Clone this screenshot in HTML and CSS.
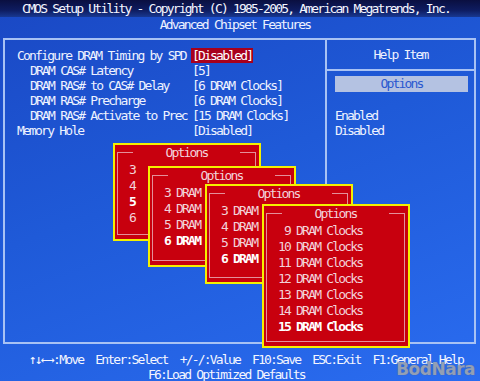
FILE: index.html
```html
<!DOCTYPE html>
<html lang="en">
<head>
    <meta charset="UTF-8">
    <title>Advanced Chipset Features</title>
    <link rel="stylesheet" href="styles.css">
</head>
<body>

<div class="screen">
    <div class="title-bar">CMOS Setup Utility - Copyright (C) 1985-2005, American Megatrends, Inc.</div>
    <div class="sub-title">Advanced Chipset Features</div>

    <div class="frame">
        <div class="items">
            <div class="row"><span class="label">Configure DRAM Timing by SPD</span><span class="value"><span class="current">[Disabled]</span></span></div>
            <div class="row"><span class="label sub">DRAM CAS# Latency</span><span class="value">[5]</span></div>
            <div class="row"><span class="label sub">DRAM RAS# to CAS# Delay</span><span class="value">[6 DRAM Clocks]</span></div>
            <div class="row"><span class="label sub">DRAM RAS# Precharge</span><span class="value">[6 DRAM Clocks]</span></div>
            <div class="row"><span class="label sub">DRAM RAS# Activate to Prec</span><span class="value">[15 DRAM Clocks]</span></div>
            <div class="row"><span class="label">Memory Hole</span><span class="value">[Disabled]</span></div>
        </div>
        <div class="help">
            <div class="help-head">Help Item</div>
            <div class="help-opt">Options</div>
            <div class="help-list">
                <div>Enabled</div>
                <div>Disabled</div>
            </div>
        </div>
    </div>

    <div class="keys">
        <div class="keys-main">↑↓←→:Move  Enter:Select  +/-/:Value  F10:Save  ESC:Exit  F1:General Help</div>
        <div class="keys-second">F6:Load Optimized Defaults</div>
    </div>

    <!-- stacked option lists, each one partly hidden by the next -->
    <div class="popup pop1">
        <div class="inner">
            <div class="legend">Options</div>
            <div class="opt">3</div>
            <div class="opt">4</div>
            <div class="opt on">5</div>
            <div class="opt">6</div>
        </div>
    </div>

    <div class="popup pop2">
        <div class="inner">
            <div class="legend">Options</div>
            <div class="opt">3 DRAM</div>
            <div class="opt">4 DRAM</div>
            <div class="opt">5 DRAM</div>
            <div class="opt on">6 DRAM</div>
        </div>
    </div>

    <div class="popup pop3">
        <div class="inner">
            <div class="legend">Options</div>
            <div class="opt">3 DRAM</div>
            <div class="opt">4 DRAM</div>
            <div class="opt">5 DRAM</div>
            <div class="opt on">6 DRAM</div>
        </div>
    </div>

    <div class="popup pop4">
        <div class="inner">
            <div class="legend">Options</div>
            <div class="opt"> 9 DRAM Clocks</div>
            <div class="opt">10 DRAM Clocks</div>
            <div class="opt">11 DRAM Clocks</div>
            <div class="opt">12 DRAM Clocks</div>
            <div class="opt">13 DRAM Clocks</div>
            <div class="opt">14 DRAM Clocks</div>
            <div class="opt on">15 DRAM Clocks</div>
        </div>
    </div>

    <div class="mark">BodNara</div>
</div>

</body>
</html>
```

FILE: styles.css
```css
body {
    margin: 0;
    background: #1a4cc8;
}
.screen {
    position: relative;
    width: 480px;
    height: 381px;
    overflow: hidden;
    font-family: "DejaVu Sans Mono", "Liberation Mono", monospace;
    font-size: 13px;
    letter-spacing: -1.8px;
    color: #eef2ff;
    background: linear-gradient(160deg, #1a48c4 0%, #1f5ad8 45%, #2a6cf0 100%);
}
.title-bar {
    height: 17px;
    line-height: 17px;
    padding-right: 8px;
    text-align: center;
    color: #f4f6ff;
    background: linear-gradient(180deg, #0a0f40 0%, #0e1c60 60%, #183890 100%);
}
.sub-title {
    height: 15px;
    line-height: 15px;
    padding-right: 10px;
    text-align: center;
}
.frame {
    display: flex;
    height: 302px;
    margin: 6px 4px 0 3px;
    border: 2px solid #a8c2f4;
}
.items {
    width: 308px;
    padding: 8px 0 0 12px;
    border-right: 2px solid #a8c2f4;
}
.row {
    display: flex;
    height: 15px;
    line-height: 15px;
}
.label {
    width: 175px;
    flex-shrink: 0;
}
.label.sub {
    width: 162px;
    padding-left: 13px;
}
.value {
    white-space: pre;
}
.current {
    display: inline-block;
    padding: 0 1px;
    margin-left: -1px;
    background: #a8001c;
    color: #fff;
}
.help {
    flex: 1;
}
.help-head {
    height: 29px;
    line-height: 29px;
    text-align: center;
    border-bottom: 2px solid #a8c2f4;
}
.help-opt {
    height: 16px;
    line-height: 16px;
    margin: 5px 6px 0 8px;
    text-align: center;
    color: #2a58d0;
    background: #b4c2e2;
}
.help-list {
    margin: 16px 0 0 8px;
    line-height: 15px;
}
.keys {
    margin-top: 8px;
    line-height: 15px;
    color: #f4f6ff;
}
.keys-main,
.keys-second {
    height: 15px;
    white-space: pre;
}
.keys-main {
    padding-left: 29px;
}
.keys-second {
    padding-left: 148px;
}

/* option popups */
.popup {
    position: absolute;
    width: 139px;
    padding: 7px 3px 4px 2px;
    background: #c8000e;
    border: 2px solid #f4f000;
}
.pop1 { left: 113px; top: 143px; height: 83px; }
.pop2 { left: 148px; top: 166px; height: 86px; }
.pop3 { left: 205px; top: 184px; height: 85px; }
.pop4 { left: 262px; top: 204px; height: 129px; }
.inner {
    height: 100%;
    padding-left: 11px;
    border: 1px solid #e4909a;
    box-sizing: border-box;
}
.legend {
    height: 16px;
    line-height: 16px;
    margin: -8px 15px 1px 4px;
    text-align: center;
    background: #c8000e;
    color: #f2d2da;
}
.opt {
    height: 16px;
    line-height: 16px;
    white-space: pre;
    color: #f2d2da;
}
.opt.on {
    color: #fff;
    font-weight: bold;
}
.mark {
    position: absolute;
    right: 5px;
    bottom: 3px;
    line-height: 18px;
    font-family: "DejaVu Sans", sans-serif;
    font-size: 17px;
    font-weight: bold;
    letter-spacing: -0.5px;
    color: rgba(170, 180, 200, 0.75);
    text-shadow: 0 0 1px #50607a;
}
```
